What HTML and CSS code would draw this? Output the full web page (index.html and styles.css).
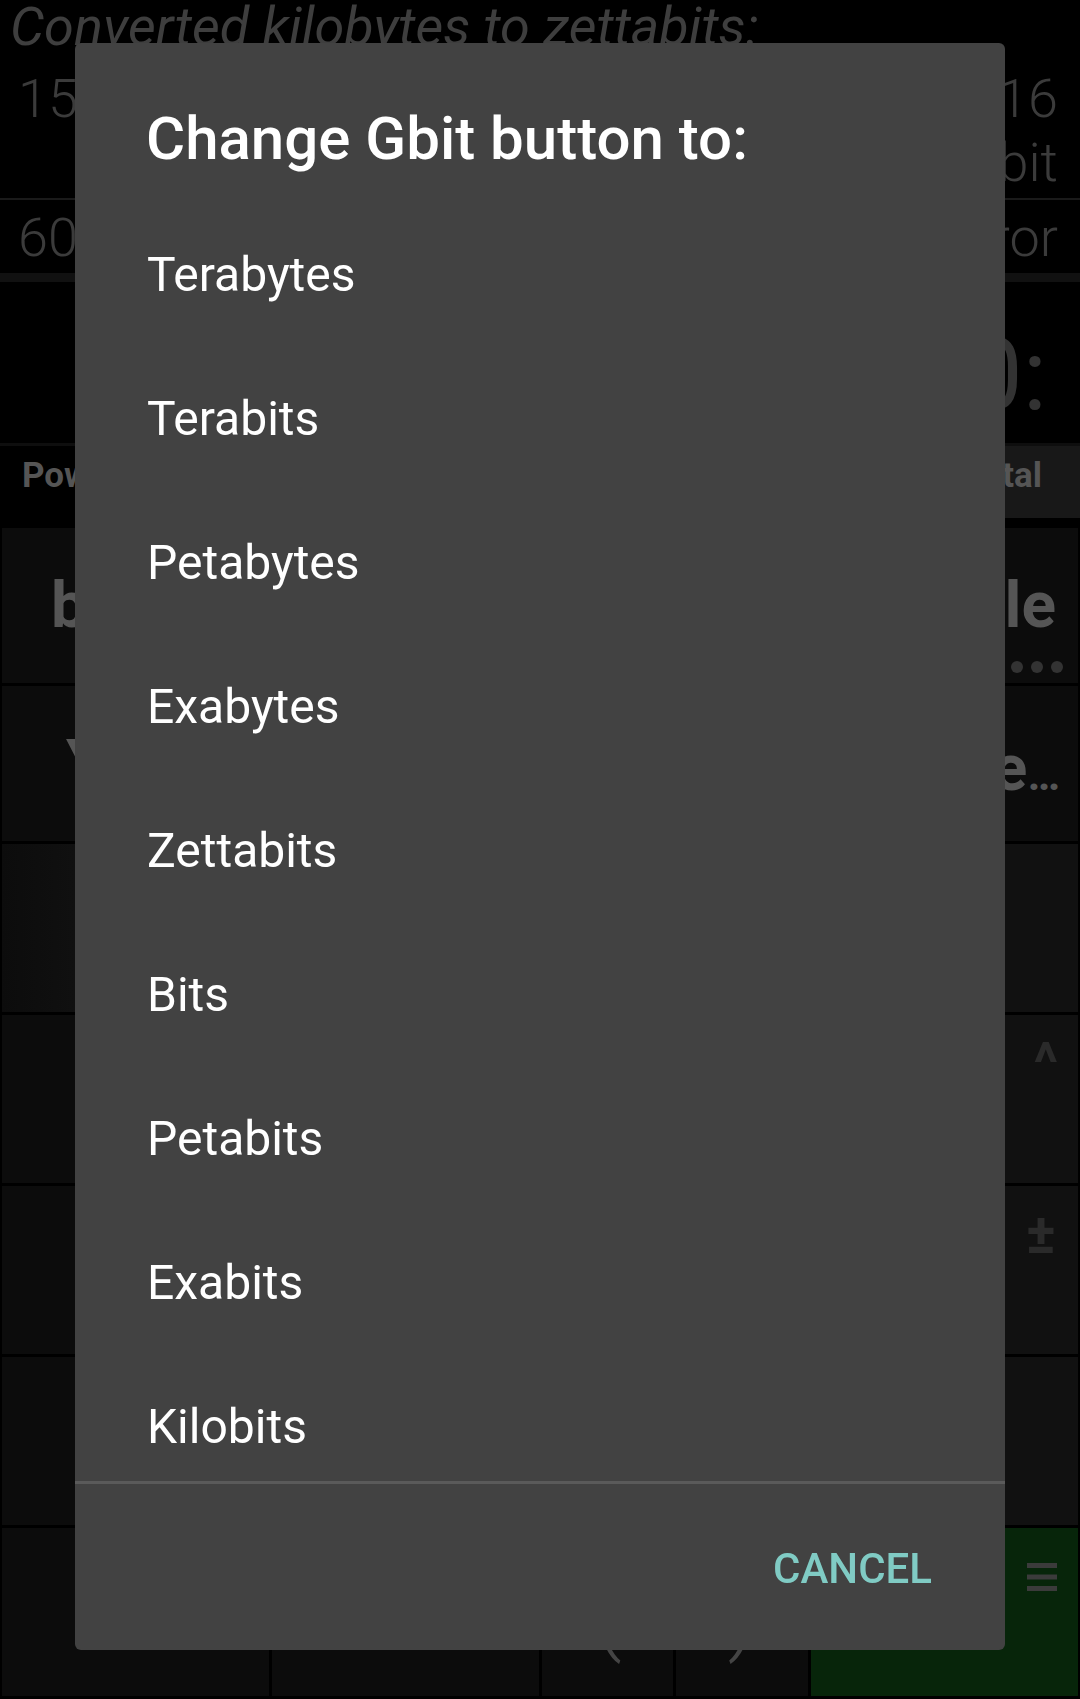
FILE: index.html
```html
<!DOCTYPE html>
<html lang="en">
<head>
<meta charset="utf-8">
<title>Unit converter - Change Gbit button</title>
<link rel="stylesheet" href="styles.css">
</head>
<body>
<div class="app">
  <div class="hist-head">Converted kilobytes to zettabits:</div>
  <div class="hist-row r1">
    <div class="hv">15 kB</div>
    <div class="hr"><div>1.2E-16</div><div>Zbit</div></div>
  </div>
  <div class="sep-thin"></div>
  <div class="hist-row r2">
    <div class="hv">60 kB</div>
    <div class="hr">Error</div>
  </div>
  <div class="sep-thick"></div>
  <div class="display">0:</div>
  <div class="tabs">
    <div class="tab-active">Power</div>
    <div class="tab-rest"><span>Data</span><span>Time</span><span>Digital</span></div>
  </div>
  <div class="keys">
    <div class="key key-l">bytes</div>
    <div class="key">kB</div>
    <div class="key">MB</div>
    <div class="key key-r">Double<span class="dots"><i></i><i></i><i></i></span></div>

    <div class="key key-l2">Yottabyte</div>
    <div class="key">GB</div>
    <div class="key">Gbit</div>
    <div class="key key-r key-r2">Change<span class="ell">…</span></div>

    <div class="key key-shade">7</div>
    <div class="key">8</div>
    <div class="key">9</div>
    <div class="key key-dim">÷</div>

    <div class="key">4</div>
    <div class="key">5</div>
    <div class="key">6</div>
    <div class="key key-dim"><span class="main">×</span><span class="alt alt-caret">^</span></div>

    <div class="key">1</div>
    <div class="key">2</div>
    <div class="key">3</div>
    <div class="key key-dim"><span class="main">−</span><span class="alt alt-pm">±</span></div>

    <div class="key">0</div>
    <div class="key">.</div>
    <div class="key">E</div>
    <div class="key key-dim">+</div>

    <div class="key">C</div>
    <div class="key">⌫</div>
    <div class="key key-s key-paren">(</div>
    <div class="key key-s key-paren">)</div>
    <div class="key key-green"><span class="main">=</span>
      <svg class="menu" width="30" height="28" viewBox="0 0 30 28"><rect x="0" y="0" width="30" height="5" fill="#3b3b3b"/><rect x="0" y="11.5" width="30" height="5" fill="#3b3b3b"/><rect x="0" y="23" width="30" height="5" fill="#3b3b3b"/></svg>
    </div>
  </div>
</div>

<div class="overlay">
  <div class="dialog">
    <div class="dlg-title">Change Gbit button to:</div>
    <div class="dlg-list">
      <div class="dlg-item">Terabytes</div>
      <div class="dlg-item">Terabits</div>
      <div class="dlg-item">Petabytes</div>
      <div class="dlg-item">Exabytes</div>
      <div class="dlg-item">Zettabits</div>
      <div class="dlg-item">Bits</div>
      <div class="dlg-item">Petabits</div>
      <div class="dlg-item">Exabits</div>
      <div class="dlg-item">Kilobits</div>
      <div class="dlg-item">Megabits</div>
    </div>
    <div class="dlg-divider"></div>
    <div class="dlg-actions"><span class="btn-cancel">CANCEL</span></div>
  </div>
</div>
</body>
</html>
```

FILE: styles.css
```css
* { box-sizing: border-box; }

html, body {
  margin: 0;
  padding: 0;
}

body {
  width: 1080px;
  height: 1699px;
  overflow: hidden;
  background: #000;
  font-family: Roboto, "Noto Sans", sans-serif;
}

.app {
  width: 1080px;
  height: 1699px;
  display: flex;
  flex-direction: column;
}

.hist-head {
  flex: none;
  height: 53px;
  padding: 3px 0 0 10px;
  font: italic 400 54px/48px Roboto, sans-serif;
  color: #3e3e3e;
  white-space: nowrap;
  overflow: hidden;
}

.hist-row {
  flex: none;
  display: flex;
  justify-content: space-between;
  padding: 0 22px 0 18px;
  font: 300 54px/64px Roboto, sans-serif;
  color: #3b3b3b;
}

.hr { text-align: right; }

.r1 { height: 145px; padding-top: 14px; }
.r2 { height: 73px; padding-top: 6px; }

.sep-thin { flex: none; height: 2px; background: #1a1a1a; }
.sep-thick { flex: none; height: 9px; background: #111; }

.display {
  flex: none;
  height: 161px;
  padding: 38px 33px 0 0;
  text-align: right;
  font: 400 100px/110px Roboto, sans-serif;
  color: #333;
}

.tabs {
  flex: none;
  height: 75px;
  border-top: 3px solid #0e0e0e;
  display: flex;
  font: 700 35px/60px Roboto, sans-serif;
  color: #555;
}

.tab-active {
  width: 300px;
  padding-left: 22px;
  background: #000;
}

.tab-rest {
  flex: 1;
  display: flex;
  justify-content: space-between;
  padding: 0 38px 0 60px;
  background: #181818;
}

.keys {
  flex: none;
  margin-top: 10px;
  padding: 0 2px;
  display: grid;
  grid-template-columns: repeat(8, 1fr);
  grid-template-rows: 155px 155px repeat(5, 168px);
  gap: 3px;
}

.key {
  grid-column: span 2;
  position: relative;
  display: flex;
  align-items: center;
  justify-content: center;
  background: #0c0c0c;
  font: 700 64px Roboto, sans-serif;
  color: #555;
  white-space: nowrap;
  overflow: hidden;
}

.key-s { grid-column: span 1; }
.key-l { justify-content: flex-start; padding-left: 49px; }
.key-l2 { justify-content: flex-start; padding-left: 64px; }
.key-r { justify-content: flex-end; padding-right: 22px; }
.key-r2 { align-items: baseline; padding-top: 45px; padding-right: 19px; }
.ell { font-size: 44px; letter-spacing: -1px; }
.key-dim { background: #111; }
.key-shade { background: linear-gradient(90deg, #0c0c0c 0%, #121212 40%, #0c0c0c 100%); }
.key-green { background: #07250a; }

.key-paren {
  font: 300 90px Roboto, sans-serif;
  color: #444;
}

.main { color: #555; }

.alt {
  position: absolute;
  font: 700 56px/56px Roboto, sans-serif;
  color: #2a2a2a;
}

.alt-caret { top: 20px; right: 20px; }
.alt-pm { top: 20px; right: 22px; }

.dots {
  position: absolute;
  right: 15px;
  bottom: 10px;
  display: flex;
  gap: 8px;
}

.dots i {
  display: block;
  width: 12px;
  height: 12px;
  border-radius: 50%;
  background: #333;
}

.menu {
  position: absolute;
  top: 35px;
  right: 21px;
}

/* Dialog */
.overlay {
  position: fixed;
  inset: 0;
}

.dialog {
  position: absolute;
  left: 75px;
  top: 43px;
  width: 930px;
  height: 1607px;
  display: flex;
  flex-direction: column;
  background: #424242;
  border-radius: 6px;
  overflow: hidden;
}

.dlg-title {
  flex: none;
  padding: 60px 72px 27px 71px;
  font: 500 60px/72px Roboto, sans-serif;
  color: #fff;
  white-space: nowrap;
}

.dlg-list {
  flex: none;
  height: 1279px;
  padding-top: 1px;
  overflow: hidden;
}

.dlg-item {
  height: 144px;
  padding-left: 72px;
  font: 400 48px/144px Roboto, sans-serif;
  color: #fff;
  white-space: nowrap;
}

.dlg-divider {
  flex: none;
  height: 3px;
  background: #5a5a5a;
}

.dlg-actions {
  flex: 1;
  display: flex;
  justify-content: flex-end;
  align-items: flex-start;
  padding: 61px 73px 0 0;
}

.btn-cancel {
  font: 500 42px/48px Roboto, sans-serif;
  color: #80cbc4;
}
```
